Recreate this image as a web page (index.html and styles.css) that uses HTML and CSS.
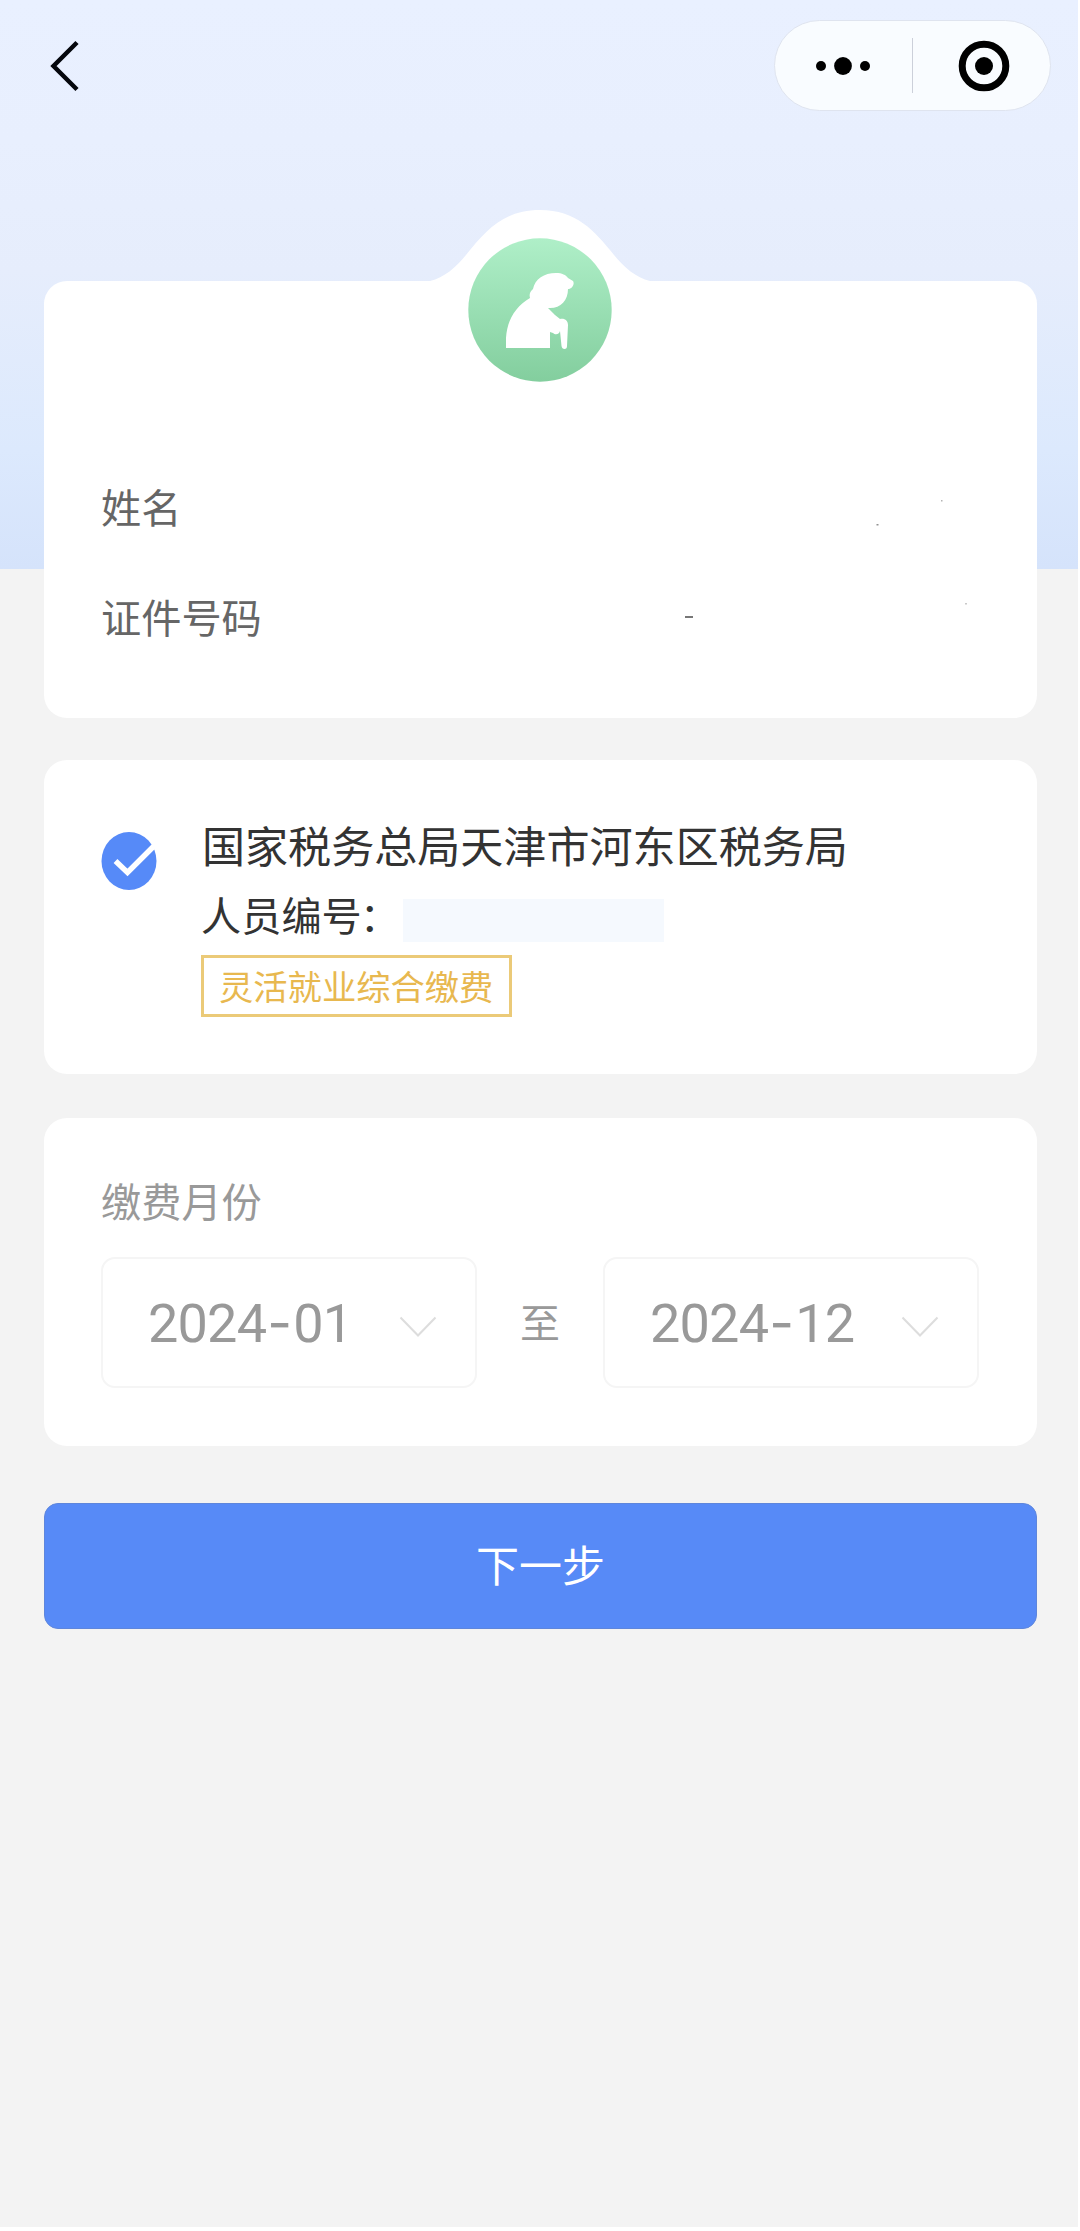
FILE: index.html
```html
<!DOCTYPE html>
<html lang="zh-CN">
<head>
<meta charset="utf-8">
<title>缴费</title>
<link rel="stylesheet" href="styles.css">
</head>
<body>
<main class="app">
  <header class="navbar">
    <svg class="back" viewBox="0 0 32 54" fill="none" stroke="#05070d" stroke-width="4.500"><path d="M28 3.500L4.500 27L28 50.500"/></svg>
    <div class="capsule">
      <svg class="dots" viewBox="0 0 56 20"><circle cx="6" cy="10" r="5"/><circle cx="28" cy="10" r="8.900"/><circle cx="50" cy="10" r="5"/></svg>
      <span class="divider"></span>
      <svg class="target" viewBox="0 0 52 52"><circle cx="26" cy="26" r="21.800" fill="none" stroke="#000" stroke-width="7"/><circle cx="26" cy="26" r="9"/></svg>
    </div>
  </header>

  <section class="card profile">
    <svg class="hump" viewBox="0 0 220 176">
      <defs><linearGradient id="mint" x1="0" y1="0" x2="0" y2="1"><stop offset="0" stop-color="#afefc8"/><stop offset="1" stop-color="#83ce9e"/></linearGradient></defs>
      <path fill="#fff" d="M0 73C14 70 26 59 36 47C56 22 74 2 110 2C146 2 164 22 184 47C194 59 206 70 220 73Z"/>
      <circle cx="110" cy="102" r="71.700" fill="url(#mint)"/>
      <path fill="#fff" d="M76 140V130C77 112 86 98 100 90C99 86 100 84 103 81C105 71 114 65 126 65C132 65 136 67 138 70L143 73C145 76 142 81 138 81C138 93 130 101 118 100L125 107L130 111C135 110 138 113 138 117L137 138Q137 141 134.500 141Q132 141 131.500 138L130 123C129 127 125 127 123 125L120 124V140Z"/>
    </svg>
    <div class="field"><span>姓名</span></div>
    <div class="field"><span>证件号码</span></div>
    <svg class="marks" viewBox="0 0 290 110" fill="#777"><rect x="257" y="5" width="1.500" height="1.500" opacity=".55"/><rect x="192.500" y="29" width="2" height="1.500" opacity=".8"/><rect x="281" y="108" width="2" height="1.500" opacity=".4"/></svg>
    <span class="dash"></span>
  </section>

  <section class="card agency">
    <svg class="check" viewBox="0 0 56 58"><ellipse cx="28" cy="29" rx="27.500" ry="29" fill="#568af8"/><path d="M14.500 29L26.500 40.500L54 13" fill="none" stroke="#fff" stroke-width="5.500"/></svg>
    <div class="details">
      <h1 class="title">国家税务总局天津市河东区税务局</h1>
      <div class="person"><span class="person-label">人员编号<span class="colon">：</span></span><span class="masked"></span></div>
      <span class="tag">灵活就业综合缴费</span>
    </div>
  </section>

  <section class="card period">
    <h2 class="label">缴费月份</h2>
    <div class="range">
      <div class="month"><span>2024<i>-</i>01</span><svg class="chevron" viewBox="0 0 38 22"><path d="M1.500 1.500L19 19.500L36.500 1.500"/></svg></div>
      <span class="to">至</span>
      <div class="month"><span>2024<i>-</i>12</span><svg class="chevron" viewBox="0 0 38 22"><path d="M1.500 1.500L19 19.500L36.500 1.500"/></svg></div>
    </div>
  </section>

  <button class="next" type="button">下一步</button>
</main>
</body>
</html>
```
FILE: styles.css
```css
* { box-sizing: border-box; }

body {
  margin: 0;
  background: #fff;
  font-family: "Noto Sans CJK SC", sans-serif;
}

svg { display: block; flex: none; }

.app {
  width: 1078px;
  height: 2227px;
  padding: 0 41px 0 44px;
  background: linear-gradient(#e9f0ff 0, #e8effe 140px, #e6edfc 270px, #dce9fd 450px, #d5e3fb 569px) 0 0 / 100% 569px no-repeat #f3f3f3;
}

.navbar {
  display: flex;
  justify-content: space-between;
  align-items: flex-start;
  height: 281px;
  padding-top: 20px;
  margin-right: -14px;
}

.back {
  width: 32px;
  height: 54px;
  margin: 19px 0 0 5px;
}

.capsule {
  display: flex;
  align-items: center;
  width: 277px;
  height: 91px;
  padding-left: 40px;
  border: 1px solid #dfe4ef;
  border-radius: 46px;
  background: #f9fcff;
}

.dots { width: 56px; height: 20px; }
.divider { flex: none; width: 1px; height: 55px; margin-left: 41px; background: #ccd0da; }
.target { width: 52px; height: 52px; margin-left: 45px; }

.card {
  border-radius: 23px;
  background: #fff;
}

.profile {
  position: relative;
  height: 437px;
  padding: 197px 57px 0 57px;
}

.hump {
  position: absolute;
  left: 386px;
  top: -73px;
  width: 220px;
  height: 176px;
}

.field {
  height: 60px;
  margin-bottom: 50px;
  color: #666;
  font-size: 40.200px;
  line-height: 56px;
}

.marks {
  position: absolute;
  left: 640px;
  top: 214px;
  width: 290px;
  height: 110px;
}

.dash {
  position: absolute;
  left: 641px;
  top: 335px;
  width: 8px;
  height: 1.500px;
  background: #777;
}

.agency {
  display: flex;
  height: 314px;
  margin-top: 42px;
  padding: 54px 58px 0 57px;
}

.check {
  width: 56px;
  height: 58px;
  margin-top: 18px;
}

.details { margin-left: 44px; }

.title {
  height: 65px;
  margin: 0;
  padding-left: 1px;
  color: #333;
  font-size: 43.070px;
  font-weight: 400;
  line-height: 60px;
  white-space: nowrap;
}

.person {
  display: flex;
  align-items: center;
  height: 70px;
  color: #333;
  font-size: 40.200px;
  line-height: 60px;
}

.person-label { width: 202px; white-space: nowrap; }
.colon { margin-left: -2px; }

.masked {
  width: 261px;
  height: 43px;
  margin-top: 12px;
  background: #f5f9fe;
}

.tag {
  display: block;
  width: 311px;
  height: 62px;
  margin-top: 6px;
  padding-left: 15px;
  border: 3px solid #ebca78;
  color: #e8b84f;
  font-size: 34.300px;
  line-height: 54px;
  white-space: nowrap;
}

.period {
  height: 328px;
  margin-top: 44px;
  padding: 52px 58px 0 57px;
}

.label {
  height: 87px;
  margin: 0;
  color: #999;
  font-size: 40.200px;
  font-weight: 400;
  line-height: 60px;
}

.range {
  display: flex;
  align-items: center;
  justify-content: space-between;
}

.month {
  display: flex;
  align-items: center;
  justify-content: space-between;
  width: 376px;
  height: 131px;
  padding: 0 38px 0 45px;
  border: 2px solid #f5f5f5;
  border-radius: 14px;
  color: #999;
  font-family: Roboto, sans-serif;
  font-size: 54px;
  letter-spacing: -0.800px;
}

.month i {
  display: inline-block;
  width: 27px;
  font-family: Inter, sans-serif;
  font-style: normal;
  letter-spacing: 0;
  text-align: center;
}

.chevron {
  width: 38px;
  height: 22px;
  margin-top: 9px;
  fill: none;
  stroke: #ddd;
  stroke-width: 2;
}

.to {
  margin-top: -4px;
  color: #999;
  font-size: 40px;
  line-height: 56px;
}

.next {
  display: block;
  width: 100%;
  height: 126px;
  margin-top: 57px;
  padding: 0 0 7px;
  border: 1px solid #5e86dc;
  border-radius: 14px;
  background: #578af7;
  color: #fff;
  font-family: inherit;
  font-size: 43px;
  line-height: 116px;
}
```
